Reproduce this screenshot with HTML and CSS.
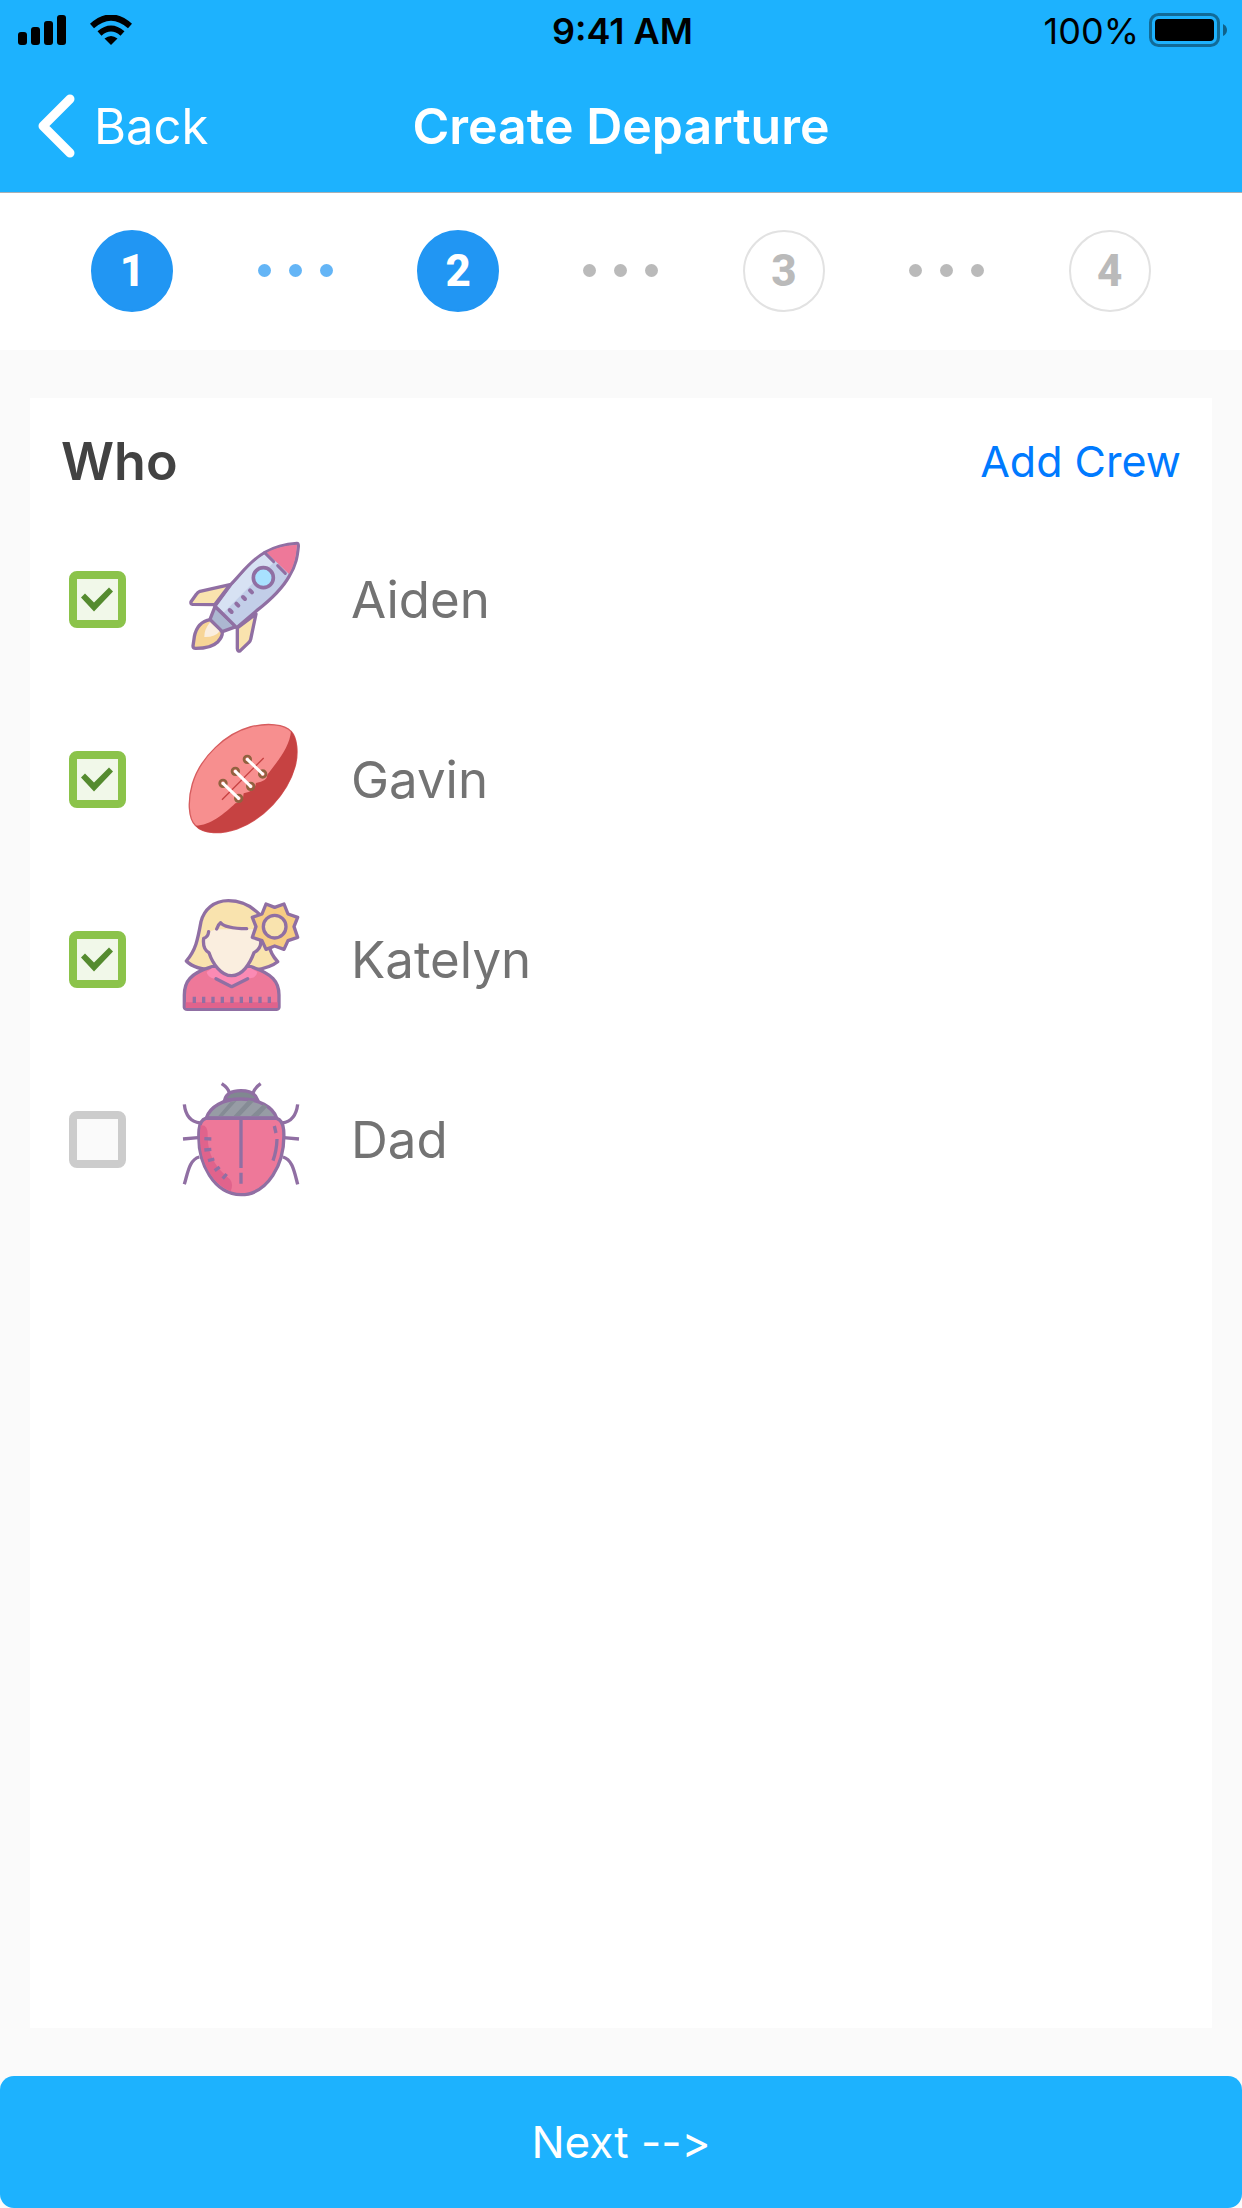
FILE: index.html
```html
<!DOCTYPE html>
<html lang="en">
<head>
<meta charset="utf-8">
<meta name="viewport" content="width=device-width, initial-scale=1">
<title>Create Departure</title>
<link rel="stylesheet" href="styles.css">
</head>
<body>
<header class="header">
  <div class="status">
    <div class="status-left">
      <svg width="48" height="30" viewBox="0 0 48 30" aria-hidden="true">
        <rect x="0" y="17" width="9" height="13" rx="3"/>
        <rect x="13" y="12" width="9" height="18" rx="3"/>
        <rect x="26" y="6" width="9" height="24" rx="3"/>
        <rect x="39" y="0" width="9" height="30" rx="3"/>
      </svg>
      <svg width="42" height="30" viewBox="0 0 42 30" aria-hidden="true">
        <path d="M2 11Q21 -6 40 11M9.500 18.500Q21 8.500 32.500 18.500" fill="none" stroke="#000" stroke-width="6"/>
        <path d="M14.500 23.500Q21 18.500 27.500 23.500L21 30Z"/>
      </svg>
    </div>
    <span class="time">9:41 AM</span>
    <div class="status-right">
      <span>100%</span>
      <svg width="78" height="34" viewBox="0 0 78 34" aria-hidden="true">
        <rect x="1.500" y="1.500" width="68" height="31" rx="8" fill="none" stroke="#000" stroke-opacity=".4" stroke-width="3"/>
        <rect x="6" y="6" width="59" height="22" rx="4"/>
        <path d="M74 11Q78 13 78 17T74 23Z" fill-opacity=".45"/>
      </svg>
    </div>
  </div>
  <nav class="nav">
    <a class="back" href="#">
      <svg width="38" height="64" viewBox="0 0 38 64" aria-hidden="true"><path d="M32 5L5 32L32 59" fill="none" stroke="#fff" stroke-width="9" stroke-linecap="round" stroke-linejoin="round"/></svg>
      Back
    </a>
    <h1 class="title">Create Departure</h1>
  </nav>
</header>

<ol class="steps">
  <li class="step done">1</li>
  <li class="dots done" aria-hidden="true"><i></i><i></i><i></i></li>
  <li class="step done">2</li>
  <li class="dots" aria-hidden="true"><i></i><i></i><i></i></li>
  <li class="step">3</li>
  <li class="dots" aria-hidden="true"><i></i><i></i><i></i></li>
  <li class="step">4</li>
</ol>

<main class="card">
  <div class="card-head">
    <h2 class="who">Who</h2>
    <a class="add" href="#">Add Crew</a>
  </div>
  <ul class="crew">
    <li>
      <label class="member">
        <input class="check" type="checkbox" checked>
        <svg class="avatar" viewBox="399 63 348 348" aria-hidden="true">
          <g stroke="#906fa3" stroke-width="10" stroke-linejoin="round" stroke-linecap="round">
            <path d="M540 194L450 214Q443 217 439 223L423 245Q421 252 428 253L494 254Z" fill="#f9e3ae"/>
            <path d="M618 282L602 358Q601 364 596 368L571 392Q563 396 562 386V324Z" fill="#f9e3ae"/>
            <path d="M481 299C450 304 438 325 433 350L429 378Q429 385 437 385C465 385 487 382 503 366Q518 350 517 336Z" fill="#f7d596"/>
            <path d="M480 307Q462 330 463 351Q495 352 510 333Z" fill="#faeedf" stroke="none"/>
            <path d="M495 260L480 298L517 335L558 320Z" fill="#acb7d1"/>
            <path d="M741 70C700 73 675 80 645 97C600 123 573 163 542 194L495 258L560 323L620 272C665 237 696 208 718 168C738 134 742 110 745 78Q745 70 741 70Z" fill="#c2cee8"/>
            <path d="M644 103C602 128 573 169 546 198L502 258L522 277L672 126Z" fill="#d7e2f3" stroke="none"/>
            <path d="M741 74C700 77 675 84 650 98L717 162C734 132 738 110 741 74Z" fill="#ee7899" stroke="none"/>
            <path d="M644 98L671 125M683 137L706 160" fill="none" stroke-width="9"/>
            <circle cx="640" cy="173" r="30" fill="#a8e1ff" stroke-width="11"/>
            <path d="M600 211L606 217M579 231L585 237M559 251L565 257M539 270L545 276" stroke-width="12"/>
          </g>
        </svg>
        <span>Aiden</span>
      </label>
    </li>
    <li>
      <label class="member">
        <input class="check" type="checkbox" checked>
        <svg class="avatar" viewBox="399 33 348 348" aria-hidden="true">
          <path d="M723 64C742 84 746 130 735 170C712 252 640 328 560 357C515 372 460 374 437 347C414 326 413 270 427 222C452 138 530 70 600 51C650 38 705 42 723 64Z" fill="#f78f8f" stroke="#d65c5e" stroke-width="4"/>
          <path d="M723 64C742 84 746 130 735 170C712 252 640 328 560 357C515 372 460 374 437 347C480 347 525 310 556 280Q580 280 581 250Q615 244 618 219Q653 213 652 194C686 150 719 110 723 64Z" fill="#c64242"/>
          <path d="M516 269L641 144" stroke="#c64242" stroke-width="4"/>
          <g fill="none" stroke="#916240" stroke-width="8">
            <circle cx="592" cy="148" r="10"/><circle cx="556" cy="184" r="10"/><circle cx="519" cy="220" r="10"/>
            <circle cx="638" cy="192" r="10"/><circle cx="602" cy="229" r="10"/><circle cx="566" cy="265" r="10"/>
          </g>
          <path d="M592 148L638 192M556 184L602 229M519 220L566 265" stroke="#fff" stroke-width="9" stroke-linecap="round"/>
        </svg>
        <span>Gavin</span>
      </label>
    </li>
    <li>
      <label class="member">
        <input class="check" type="checkbox" checked>
        <svg class="avatar" viewBox="399 63 348 348" aria-hidden="true">
          <g stroke="#906fa3" stroke-width="10" stroke-linejoin="round" stroke-linecap="round">
            <path d="M535 62C490 62 462 90 453 125C443 180 437 211 409 243Q432 268 500 272H590Q655 268 683 245Q660 220 658 195L630 105Q590 62 535 62Z" fill="#f9e3ae"/>
            <path d="M486 260C420 280 403 305 403 345V382Q404 388 412 388H679Q686 388 687 382V345C687 305 668 282 602 260Z" fill="#ee7899"/>
            <path d="M470 276L487 264H602L622 276Q620 292 600 295L545 320L493 296Q472 292 470 276Z" fill="#fb8ab4" stroke="none"/>
            <path d="M407 367H683V384H407Z" fill="#e0638c" stroke="none"/>
            <path d="M475 155Q470 171 461 175Q457 205 477 218C488 251 513 287 545 287C577 287 600 251 612 218Q635 205 630 180L616 173V148H500Z" fill="#faeedf" stroke="none"/>
            <path d="M476 155Q474 172 461 175Q457 207 477 218C488 251 513 287 545 287C577 287 600 251 612 218Q635 205 632 182M500 147Q505 133 512 128Q525 145 590 146M498 296L545 320L593 296" fill="none"/>
            <path d="M433 350V369M461 350V369M489 350V369M517 350V369M546 350V369M574 350V369M602 350V369M630 350V369M658 350V369" fill="none" stroke-linecap="butt"/>
            <path d="M648 72L674 82L702 72L714 102L743 112L732 140L743 172L714 182L702 208L674 198L648 208L636 182L607 172L618 140L607 112L636 102Z" fill="#f7cd83"/>
            <circle cx="674" cy="140" r="34" fill="#f9e3ae"/>
          </g>
        </svg>
        <span>Katelyn</span>
      </label>
    </li>
    <li>
      <label class="member">
        <input class="check" type="checkbox">
        <svg class="avatar" viewBox="399 33 348 348" aria-hidden="true">
          <g stroke="#906fa3" stroke-width="10" fill="none">
            <path d="M515 41Q535 54 538 69M632 41Q614 54 609 69M403 103Q408 153 450 159M743 103Q737 153 697 159M399 207L444 203M747 207L701 203M403 343C413 310 418 268 448 261M743 343C734 310 728 268 699 261"/>
            <path d="M524 90C528 72 545 62 573 62S617 72 623 90Z" fill="#808890"/>
            <path d="M469 144C480 110 520 87 573 87S668 110 680 144Z" fill="#979ca5"/>
            <path d="M505 138L540 97L560 92L519 138ZM551 138L595 91L612 94L570 138ZM603 138L640 103L652 110L626 138Z" fill="#858b95" stroke="none"/>
            <path d="M467 145H680Q698 150 701 180C708 285 650 374 573 374S440 285 447 180Q450 150 467 145Z" fill="#ee7899"/>
            <path d="M452 166Q474 163 473 195C472 270 513 303 540 328Q551 343 542 364C480 340 440 260 452 166Z" fill="#e0638c" stroke="none"/>
            <path d="M573 146V294M573 308V341M673 168L678 189M681 207Q680 242 669 272M463 206L484 207M463 240L484 238M474 272L493 267M494 302L509 291M518 326L530 312"/>
          </g>
        </svg>
        <span>Dad</span>
      </label>
    </li>
  </ul>
</main>

<button class="next" type="button">Next --&gt;</button>
</body>
</html>
```

FILE: styles.css
```css
* {
  box-sizing: border-box;
}

body {
  margin: 0;
  min-height: 100vh;
  display: flex;
  flex-direction: column;
  background: #fafafa;
  font-family: Inter, "Liberation Sans", sans-serif;
}

h1,
h2,
ol,
ul {
  margin: 0;
  padding: 0;
  list-style: none;
}

a {
  text-decoration: none;
}

svg {
  display: block;
  flex: none;
}

.header {
  background: #1db2fe;
  border-bottom: 1px solid #a9b0b5;
}

.status {
  height: 60px;
  padding: 0 15px 0 18px;
  display: grid;
  grid-template-columns: 1fr auto 1fr;
  align-items: center;
  font-size: 36px;
  color: #000;
}

.status span {
  padding-top: 2px;
}

.status-left,
.status-right {
  display: flex;
  align-items: center;
}

.status-left {
  gap: 24px;
}

.status-right {
  justify-content: flex-end;
  gap: 10px;
}

.time {
  font-weight: 600;
}

.nav {
  height: 132px;
  padding: 0 38px;
  display: grid;
  grid-template-columns: 1fr auto 1fr;
  align-items: center;
  color: #fff;
}

.back {
  display: flex;
  align-items: center;
  gap: 18px;
  font-size: 49px;
  color: #fff;
}

.title {
  font-size: 50px;
  font-weight: 600;
}

.steps {
  height: 157px;
  padding: 0 51px 2px;
  display: grid;
  grid-template-columns: repeat(7, 1fr);
  align-items: center;
  justify-items: center;
  background: #fff;
}

.step {
  width: 82px;
  height: 82px;
  display: flex;
  align-items: center;
  justify-content: center;
  border: 2px solid #e2e2e2;
  border-radius: 50%;
  font-family: Roboto, sans-serif;
  font-size: 44px;
  font-weight: 800;
  color: #bababa;
}

.step.done {
  border-color: #2196f3;
  background: #2196f3;
  color: #fff;
}

.dots {
  display: flex;
  gap: 18px;
}

.dots i {
  width: 13px;
  height: 13px;
  border-radius: 50%;
  background: #bababa;
}

.dots.done i {
  background: #64b5f6;
}

.card {
  flex: 1;
  margin: 48px 30px;
  padding-top: 15px;
  background: #fff;
}

.card-head {
  height: 96px;
  padding: 0 31px;
  display: flex;
  align-items: center;
  justify-content: space-between;
}

.who {
  font-size: 52px;
  font-weight: 600;
  color: #424242;
}

.add {
  font-size: 43px;
  color: #007aff;
}

.member {
  height: 180px;
  padding-left: 39px;
  display: flex;
  align-items: center;
  font-size: 51px;
  color: #737373;
}

.check {
  appearance: none;
  flex: none;
  width: 57px;
  height: 57px;
  margin: 0 57px 0 0;
  border: 8px solid #ccc;
  border-radius: 8px;
  background: #fafafa;
}

.check:checked {
  border-color: #8bc34a;
  background: #f1f8e9;
}

.check:checked::before {
  content: "";
  display: block;
  width: 41px;
  height: 41px;
  background: #558b2f;
  clip-path: polygon(4px 19px, 8px 15px, 17px 24px, 32px 9px, 36px 13px, 17px 33px);
}

.avatar {
  width: 116px;
  height: 116px;
  margin-right: 52px;
  overflow: visible;
}

.next {
  height: 132px;
  border: 0;
  border-radius: 14px;
  background: #1db2fe;
  font-family: inherit;
  font-size: 44px;
  font-variant-ligatures: none;
  color: #fff;
}
```
